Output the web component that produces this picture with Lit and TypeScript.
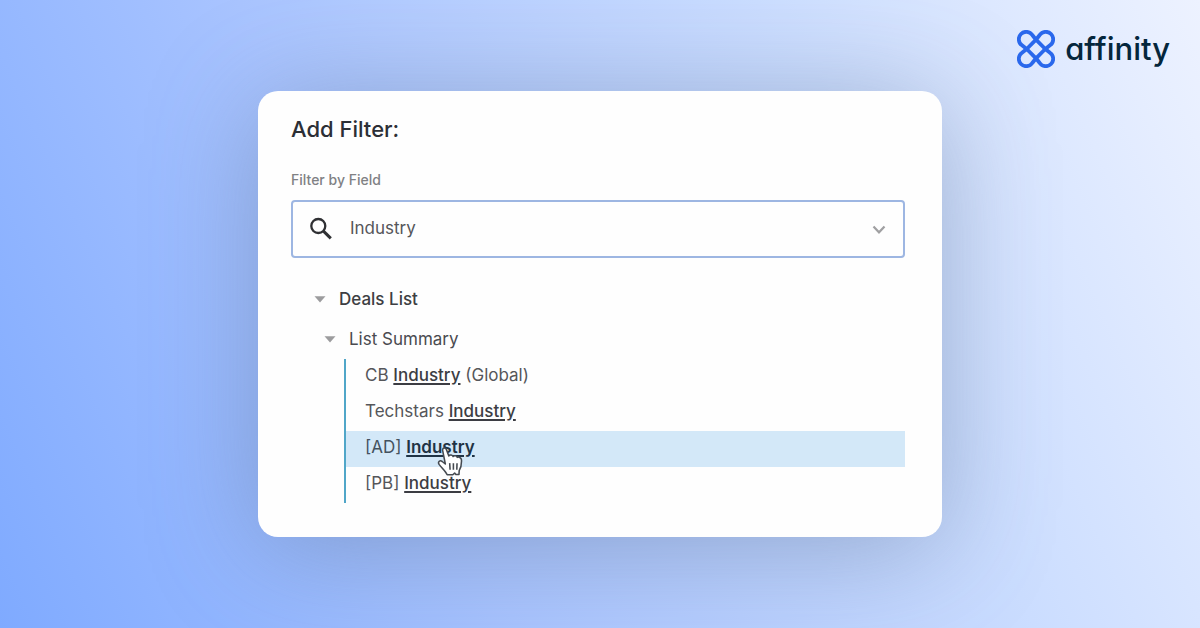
import { LitElement, html, css } from "lit";
import { customElement, property, state } from "lit/decorators.js";

interface Field {
  before: string;
  after: string;
}

const FIELDS: Field[] = [
  { before: "CB ", after: " (Global)" },
  { before: "Techstars ", after: "" },
  { before: "[AD] ", after: "" },
  { before: "[PB] ", after: "" },
];

@customElement("brand-logo")
class BrandLogo extends LitElement {
  static styles = css`
    :host {
      display: flex;
      align-items: center;
      gap: 10px;
      color: #04263c;
    }
    .mark {
      width: 38px;
      height: 38px;
      fill: none;
      stroke: #2a68ec;
      stroke-width: 3.8;
      stroke-linejoin: round;
    }
    .word {
      font: 500 31px/38px Inter, sans-serif;
      font-feature-settings: "cv11";
    }
  `;

  render() {
    return html`
      <svg class="mark" viewBox="0 0 38 38" aria-hidden="true">
        <path d="M19 9.7 L15.3 5 A7.4 7.4 0 1 0 5 15.3 L9.7 19 Z" />
        <path d="M19 9.7 L22.7 5 A7.4 7.4 0 1 1 33 15.3 L28.3 19 Z" />
        <path d="M19 28.3 L15.3 33 A7.4 7.4 0 1 1 5 22.7 L9.7 19 Z" />
        <path d="M19 28.3 L22.7 33 A7.4 7.4 0 1 0 33 22.7 L28.3 19 Z" />
      </svg>
      <span class="word">affinity</span>
    `;
  }
}

@customElement("filter-card")
class FilterCard extends LitElement {
  @property({ type: String }) query = "Industry";
  @state() private active = 2;

  static styles = css`
    :host {
      display: block;
      box-sizing: border-box;
      padding: 24px 37px 34px 33px;
      border-radius: 20px;
      background: #fefefe;
      color: #55565a;
      font: 400 17px/36px Inter, sans-serif;
      box-shadow: 0 12px 110px rgba(85, 108, 140, 0.42);
    }
    .title {
      margin: 0 0 25px;
      color: #2c2f36;
      font-size: 22px;
      line-height: 28px;
      font-weight: 500;
    }
    .label {
      display: block;
      margin-bottom: 8px;
      color: #808184;
      font-size: 14px;
      line-height: 24px;
      font-weight: 500;
    }
    .box {
      display: flex;
      align-items: center;
      box-sizing: border-box;
      height: 58px;
      padding: 0 17px 0 16px;
      border: 2px solid #9db6e2;
      border-radius: 4px;
    }
    .search {
      width: 24px;
      height: 24px;
      fill: none;
      stroke: #2f3033;
      stroke-width: 2.3;
    }
    .input {
      flex: 1;
      min-width: 0;
      margin-left: 17px;
      padding: 0 0 2px;
      border: 0;
      outline: 0;
      background: none;
      color: #55565a;
      font: inherit;
    }
    button {
      display: flex;
      align-items: center;
      padding: 0;
      border: 0;
      background: none;
      color: inherit;
      font: inherit;
      text-align: left;
      cursor: pointer;
    }
    .chevron {
      width: 14px;
      height: 10px;
      padding-top: 2px;
      fill: none;
      stroke: #a0a0a2;
      stroke-width: 2.2;
    }
    .tree {
      margin-top: 21px;
    }
    .toggle {
      gap: 13px;
      height: 40px;
    }
    .list {
      margin-left: 23px;
      color: #3d3e43;
      font-weight: 500;
    }
    .group {
      margin-left: 33px;
      color: #4a4b50;
    }
    .arrow {
      width: 12px;
      height: 7px;
      fill: #9c9c9e;
    }
    .fields {
      margin: 0 0 0 53px;
      padding: 0;
      border-left: 2px solid #50a6c8;
      list-style: none;
    }
    .field {
      position: relative;
      box-sizing: border-box;
      width: 100%;
      height: 36px;
      padding: 0 0 4px 19px;
      white-space: pre;
    }
    .active {
      background: #d3e8f8;
      color: #43525f;
    }
    .match {
      background: none;
      color: #3c3d43;
      font-weight: 500;
      text-decoration: underline;
      text-decoration-thickness: 2px;
      text-underline-offset: 2px;
    }
    .active .match {
      color: #1f3345;
      font-weight: 600;
    }
    .cursor {
      position: absolute;
      left: 91px;
      top: 16px;
      width: 27px;
      height: 29px;
      z-index: 1;
    }
  `;

  render() {
    return html`
      <h1 class="title">Add Filter:</h1>
      <label class="label" for="field">Filter by Field</label>
      <div class="box">
        <svg class="search" viewBox="0 0 24 24" aria-hidden="true">
          <circle cx="9.3" cy="9" r="7" />
          <path d="M14.2 13.9 L21.8 21.4" stroke-width="3" />
        </svg>
        <input
          class="input"
          id="field"
          type="text"
          .value=${this.query}
          @input=${(e: Event) => (this.query = (e.target as HTMLInputElement).value)}
        />
        <button aria-label="Show fields">
          <svg class="chevron" viewBox="0 0 14 10"><path d="M1.5 1.5 L7 7.3 L12.5 1.5" /></svg>
        </button>
      </div>
      <div class="tree">
        <button class="toggle list" aria-expanded="true">${this.arrow()}Deals List</button>
        <button class="toggle group" aria-expanded="true">${this.arrow()}List Summary</button>
        <ul class="fields">
          ${FIELDS.map(
            (f, i) => html`<li>
              <button class="field ${i === this.active ? "active" : ""}" @click=${() => (this.active = i)}
                ><span>${f.before}<mark class="match">${this.query}</mark>${f.after}</span
                >${i === this.active ? this.pointer() : ""}</button>
            </li>`
          )}
        </ul>
      </div>
    `;
  }

  private arrow() {
    return html`<svg class="arrow" viewBox="0 0 12 7" aria-hidden="true"><path d="M.5 .3 H11.5 L6 6.5 Z" /></svg>`;
  }

  private pointer() {
    return html`<svg class="cursor" viewBox="0 0 26 28" aria-hidden="true">
      <path
        d="M5.4 3.2 C4.8 .8 8.2 .2 9 2.4 L11.4 8.6 C12.2 7.2 15 7.4 15.5 9.2 C16.4 8 19 8.4 19.5 10 C20.8 9.2 23.4 10.2 23.6 12.4 C23.8 17 23.4 19.8 21.4 22.8 L21.2 26.6 H18.2 L17 25.2 L15.2 26.8 H9.8 C8.4 23.6 4 19.6 2 16.8 C.4 14.2 2.8 12.4 5 14 L8 16.4 Z"
        fill="#fff"
        stroke="#454a50"
        stroke-width="1.5"
        stroke-linejoin="round"
      />
      <path d="M12.2 15.6 L12.6 22 M15.8 15.6 V22 M19.3 15.6 L19.1 22" stroke="#454a50" stroke-width="1.5" fill="none" />
    </svg>`;
  }
}

@customElement("app-root")
class AppRoot extends LitElement {
  static styles = css`
    :host {
      display: grid;
      grid-template-columns: minmax(0, 1fr);
      min-height: 100vh;
      background: linear-gradient(66deg, #7faaff 0%, #a9c4ff 35%, #cbddff 70%, #edf2ff 100%);
    }
    .brand {
      grid-area: 1 / 1;
      place-self: start end;
      padding: 30px 30px 0 0;
    }
    .card {
      grid-area: 1 / 1;
      place-self: center;
      width: 57%;
      min-width: 320px;
    }
  `;

  render() {
    return html`
      <filter-card class="card"></filter-card>
      <brand-logo class="brand"></brand-logo>
    `;
  }
}
